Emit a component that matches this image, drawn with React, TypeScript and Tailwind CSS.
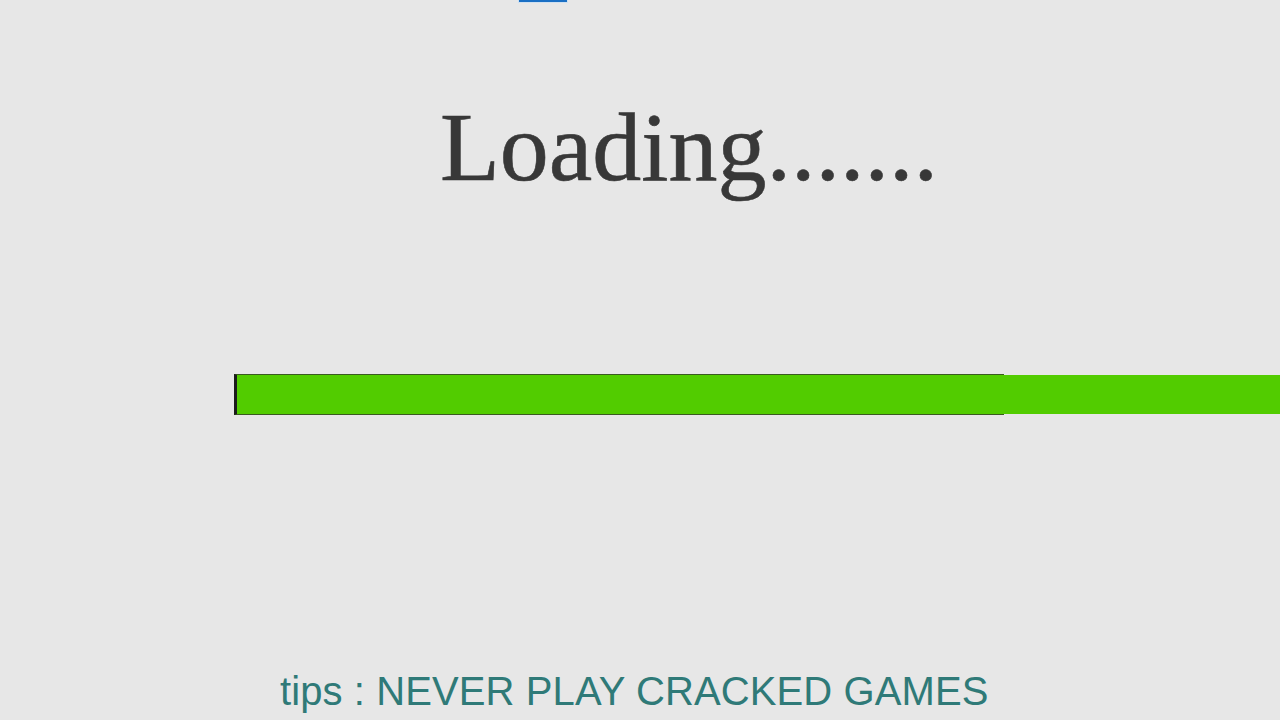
export default function App() {
  return (
    <div className="h-[720px] w-full overflow-hidden bg-[#e7e7e7]">
      {/* cut-off element at the very top */}
      <div className="ml-[518px] h-[3px] w-[50px] border-x border-b border-[#cfe0f0] bg-[#1a6fc4]" />

      {/* heading */}
      <h1
        className="ml-[440px] mt-[95px] whitespace-nowrap text-[98px] leading-none text-[#383838] [-webkit-text-stroke:0.6px_#383838]"
        style={{ fontFamily: '"Liberation Serif", "Times New Roman", serif' }}
      >
        Loading.......
      </h1>

      {/* progress bar */}
      <div className="ml-[234px] mt-[178px] h-[41px] w-[770px] border-y border-l-[3px] border-y-[#3a5a20] border-l-[#1c1c1c]">
        <div className="h-full w-[1100px] bg-[#52cc00]" />
      </div>

      {/* tips */}
      <p
        className="ml-[280px] mt-[256px] whitespace-nowrap text-[40px] leading-none tracking-[0.1px] text-[#2f7a78]"
        style={{ fontFamily: '"Liberation Sans", Arial, sans-serif' }}
      >
        tips : NEVER PLAY CRACKED GAMES
      </p>
    </div>
  );
}
